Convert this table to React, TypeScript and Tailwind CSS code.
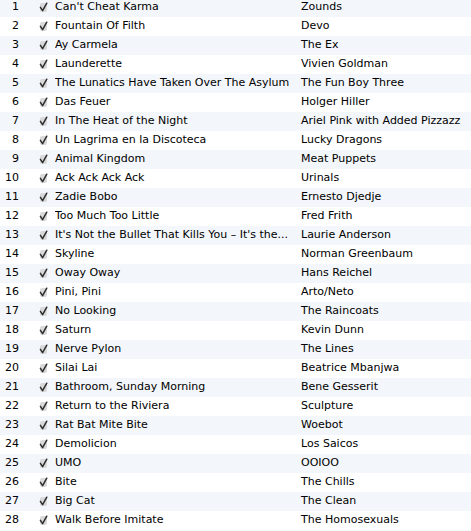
import React from "react";

const rows: [string, string][] = [
  ["Can't Cheat Karma", "Zounds"],
  ["Fountain Of Filth", "Devo"],
  ["Ay Carmela", "The Ex"],
  ["Launderette", "Vivien Goldman"],
  ["The Lunatics Have Taken Over The Asylum", "The Fun Boy Three"],
  ["Das Feuer", "Holger Hiller"],
  ["In The Heat of the Night", "Ariel Pink with Added Pizzazz"],
  ["Un Lagrima en la Discoteca", "Lucky Dragons"],
  ["Animal Kingdom", "Meat Puppets"],
  ["Ack Ack Ack Ack", "Urinals"],
  ["Zadie Bobo", "Ernesto Djedje"],
  ["Too Much Too Little", "Fred Frith"],
  ["It's Not the Bullet That Kills You \u2013 It's the...", "Laurie Anderson"],
  ["Skyline", "Norman Greenbaum"],
  ["Oway Oway", "Hans Reichel"],
  ["Pini, Pini", "Arto/Neto"],
  ["No Looking", "The Raincoats"],
  ["Saturn", "Kevin Dunn"],
  ["Nerve Pylon", "The Lines"],
  ["Silai Lai", "Beatrice Mbanjwa"],
  ["Bathroom, Sunday Morning", "Bene Gesserit"],
  ["Return to the Riviera", "Sculpture"],
  ["Rat Bat Mite Bite", "Woebot"],
  ["Demolicion", "Los Saicos"],
  ["UMO", "OOIOO"],
  ["Bite", "The Chills"],
  ["Big Cat", "The Clean"],
  ["Walk Before Imitate", "The Homosexuals"],
  ["", ""],
];

export default function App() {
  return (
    <div
      className="w-[471px] h-[531px] overflow-hidden bg-white text-[11px] text-black"
      style={{ fontFamily: '"DejaVu Sans", sans-serif' }}
    >
      <div className="-mt-[2px] flex flex-col">
        {rows.map(([title, artist], i) => (
          <div
            key={i}
            className={`flex h-[19px] items-center ${i % 2 === 0 ? "bg-[#f3f6fa]" : "bg-white"}`}
          >
            {title ? (
              <>
                <div className="w-[19px] shrink-0 text-right">{i + 1}</div>
                <div className="ml-[20px] w-[9px] shrink-0 relative h-[19px] flex items-center">
                  <span className="block ml-[1px] w-[7px] h-[9px] rounded-[2px] bg-[#d9d9d9]" />
                  <svg
                    className="absolute left-0 top-[4px]"
                    width="9"
                    height="10"
                    viewBox="0 0 9 10"
                  >
                    <path
                      d="M1.4 5.4 L3.6 8.6 L7.8 1.2"
                      fill="none"
                      stroke="#2e2e2e"
                      strokeWidth="1.5"
                      strokeLinecap="round"
                      strokeLinejoin="round"
                    />
                  </svg>
                </div>
                <div className="ml-[7px] w-[246px] shrink-0 whitespace-nowrap overflow-hidden">
                  {title}
                </div>
                <div className="whitespace-nowrap">{artist}</div>
              </>
            ) : null}
          </div>
        ))}
      </div>
    </div>
  );
}
